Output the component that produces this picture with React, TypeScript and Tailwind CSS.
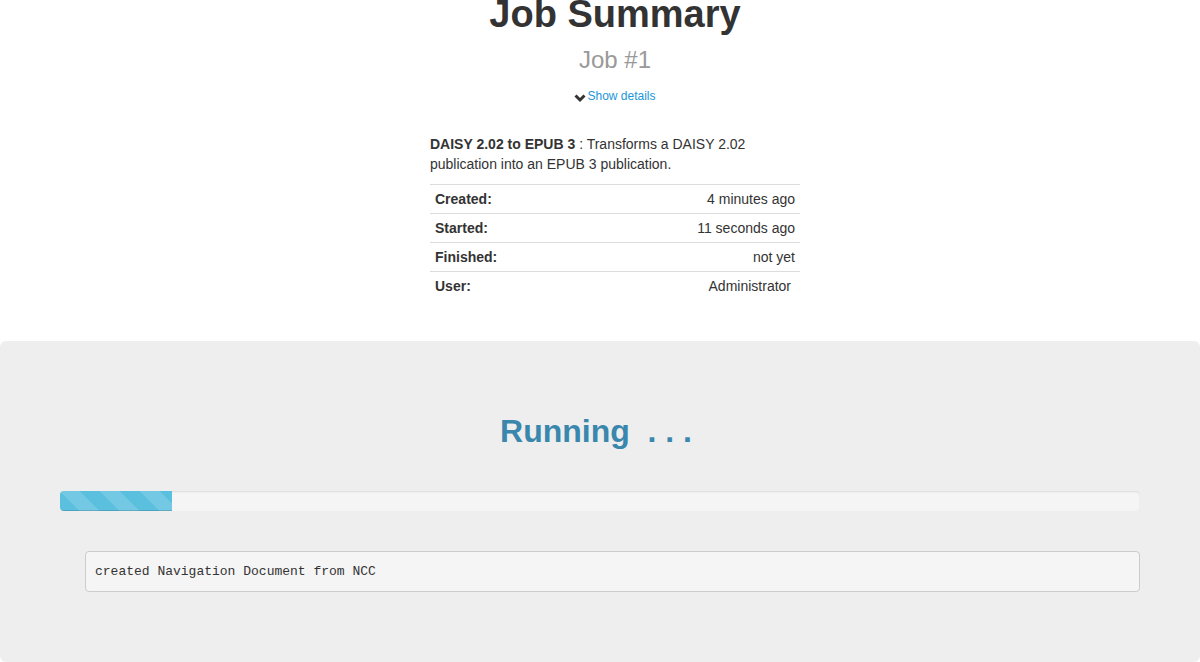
import React from 'react'

const rows = [
  { label: 'Created:', value: '4 minutes ago' },
  { label: 'Started:', value: '11 seconds ago' },
  { label: 'Finished:', value: 'not yet' },
  { label: 'User:', value: 'Administrator', extra: true },
]

export default function App() {
  return (
    <div className="w-[1200px] h-[662px] overflow-hidden bg-white text-[14px] leading-[20px] text-[#333] font-['Liberation_Sans',Arial,sans-serif]">
      {/* Header + summary, offset like the original column */}
      <div className="pl-[30px]">
        <div className="flex flex-col items-center">
          <h1 className="-mt-[6px] text-[38px] leading-[1.1] font-bold text-[#333]">Job Summary</h1>
          <h2 className="mt-[11px] text-[24px] leading-[1.1] text-[#999]">Job #1</h2>
          <a className="mt-[15px] flex items-center text-[12px] leading-[17px] text-[#2196d8]">
            <svg width="12" height="10" viewBox="0 0 12 10" className="mr-[1px] mt-[3px]">
              <polyline points="1.5,2.5 6,7 10.5,2.5" fill="none" stroke="#333" strokeWidth="3" />
            </svg>
            Show details
          </a>
        </div>

        <div className="w-[370px] mx-auto mt-[29px]">
          <p className="mb-[10px]">
            <b>DAISY 2.02 to EPUB 3</b> : Transforms a DAISY 2.02 publication into an EPUB 3 publication.
          </p>
          <table className="w-full border-collapse">
            <tbody>
              {rows.map((r) => (
                <tr key={r.label} className="border-t border-[#ddd]">
                  <td className="px-[5px] py-[4px] font-bold">{r.label}</td>
                  <td className={`py-[4px] text-right ${r.extra ? 'pr-[9px]' : 'pr-[5px]'}`}>{r.value}</td>
                </tr>
              ))}
            </tbody>
          </table>
        </div>
      </div>

      {/* Jumbotron */}
      <div className="mt-[41px] h-[321px] bg-[#eee] rounded-[6px] px-[60px] pt-[73px]">
        <h2 className="text-center text-[32px] leading-[1.1] font-bold text-[#3a87ad] pr-[8px]">
          Running&nbsp; . . .
        </h2>
        <div className="mt-[42px] h-[20px] bg-[#f5f5f5] rounded-[4px] overflow-hidden shadow-[inset_0_1px_2px_rgba(0,0,0,0.1)]">
          <div
            className="h-full bg-[#5bc0de] bg-[linear-gradient(45deg,rgba(255,255,255,0.15)_25%,transparent_25%,transparent_50%,rgba(255,255,255,0.15)_50%,rgba(255,255,255,0.15)_75%,transparent_75%,transparent)] bg-size-[40px_40px] shadow-[inset_0_-1px_0_rgba(0,0,0,0.15)]"
            style={{ width: '112px' }}
          />
        </div>
        <div className="mt-[40px] ml-[25px] border border-[#ccc] rounded-[4px] bg-[#f5f5f5] pl-[9px] pr-[9.5px] pt-[11px] pb-[9px] text-[13px] leading-[18.5px] text-[#333] font-['Liberation_Mono','Courier_New',monospace]">
          created Navigation Document from NCC
        </div>
      </div>
    </div>
  )
}
